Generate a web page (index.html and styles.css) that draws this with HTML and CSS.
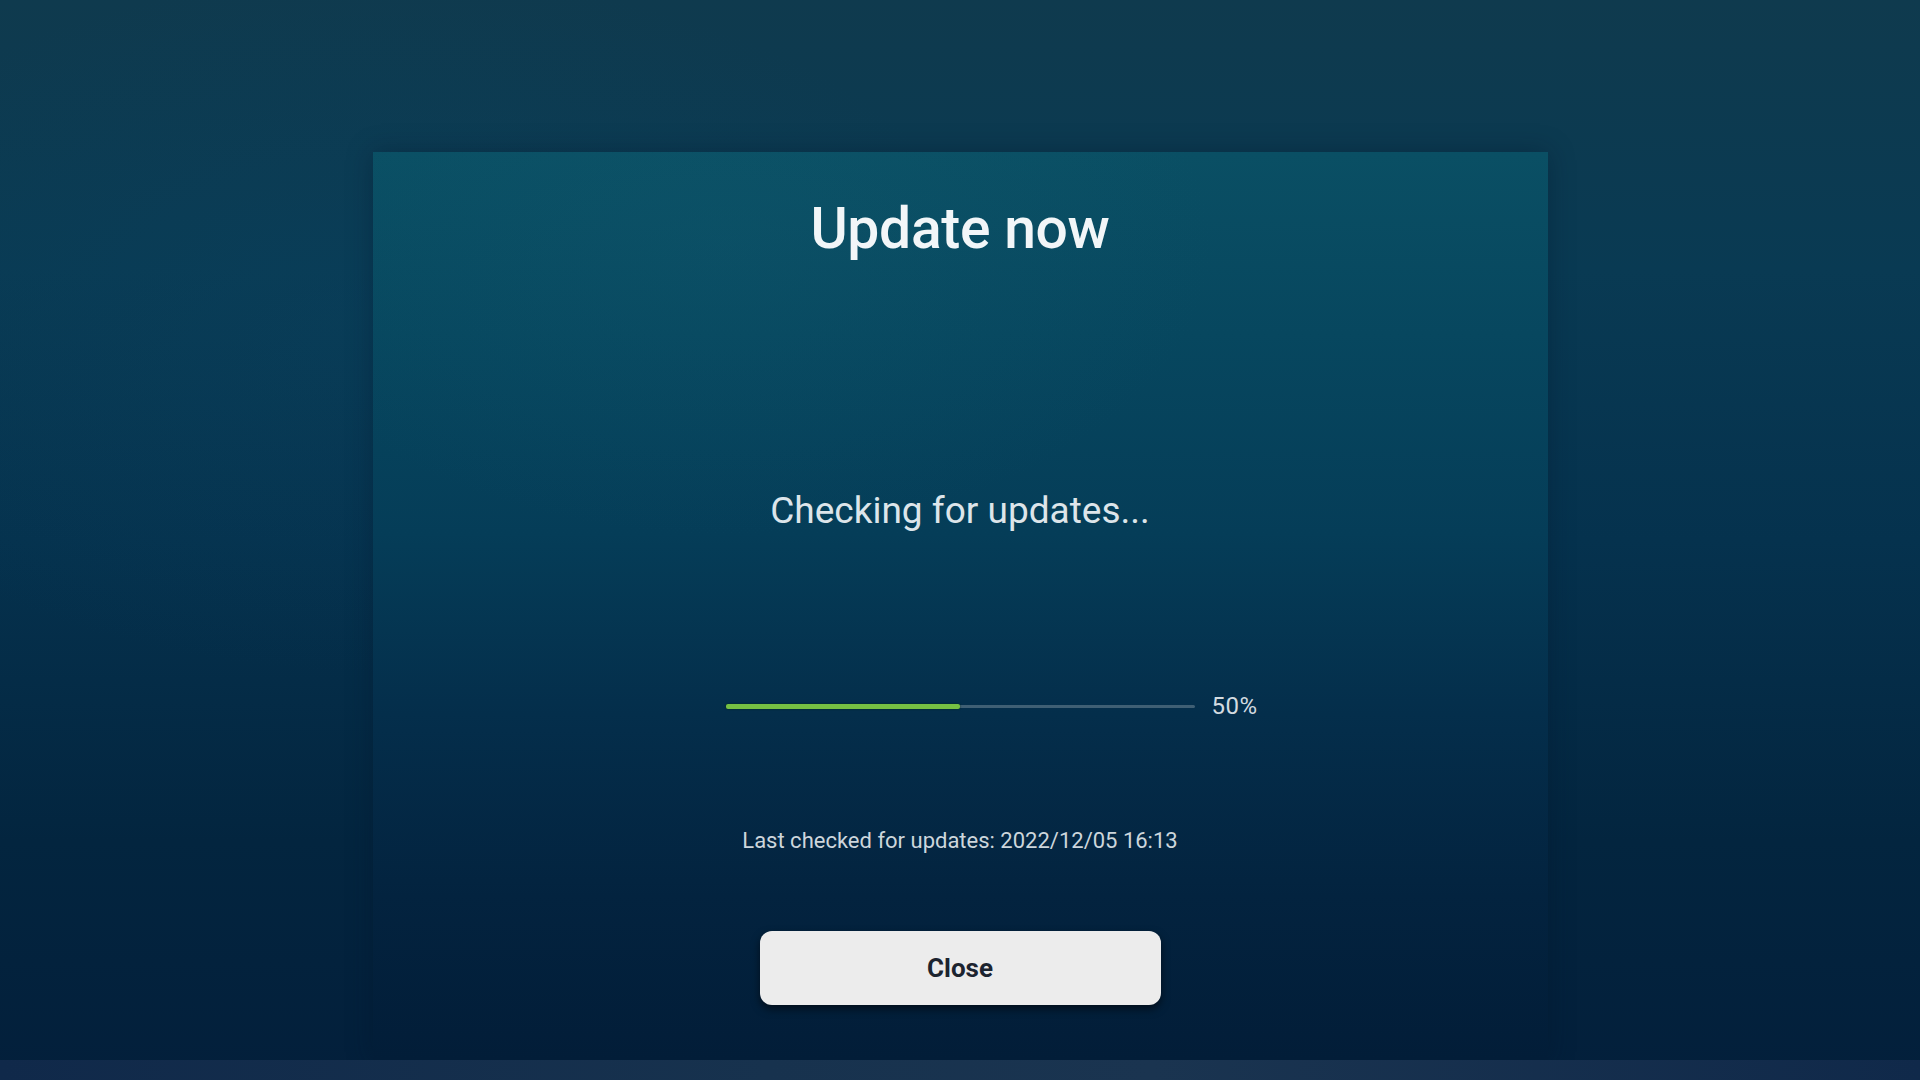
FILE: index.html
```html
<!DOCTYPE html>
<html lang="en">
<head>
<meta charset="utf-8">
<title>Update now</title>
<link rel="stylesheet" href="styles.css">
</head>
<body>
<div class="screen">
  <div class="panel">
    <h1 class="title">Update now</h1>
    <p class="status">Checking for updates...</p>
    <div class="progress">
      <div class="track"><div class="fill" style="width:50%"></div></div>
      <span class="pct">50%</span>
    </div>
    <p class="last">Last checked for updates: 2022/12/05 16:13</p>
    <button class="btn" type="button">Close</button>
  </div>
  <div class="strip"></div>
</div>
</body>
</html>
```

FILE: styles.css
```css
html, body {
  margin: 0;
  padding: 0;
  width: 1920px;
  height: 1080px;
  overflow: hidden;
}

body {
  font-family: Roboto, "Open Sans", "Liberation Sans", sans-serif;
  background: #062a45;
}

.screen {
  width: 1920px;
  height: 1080px;
  box-sizing: border-box;
  padding-top: 152px;
  display: flex;
  flex-direction: column;
  align-items: center;
  background:
    radial-gradient(ellipse 900px 500px at 20% 30%, rgba(10, 70, 100, 0.3), rgba(10, 70, 100, 0) 70%),
    linear-gradient(180deg, #0f3a4e 0%, #093a53 25%, #05324e 50%, #03253f 78%, #031f3b 100%);
}

.panel {
  width: 1175px;
  height: 908px;
  box-sizing: border-box;
  padding-top: 48px;
  display: flex;
  flex-direction: column;
  align-items: center;
  box-shadow: 0 0 24px rgba(0, 20, 40, 0.35);
  background:
    radial-gradient(ellipse 700px 420px at 30% 10%, rgba(20, 95, 115, 0.22), rgba(20, 95, 115, 0) 70%),
    linear-gradient(180deg, #0a4f64 0%, #07475f 20%, #053d58 42%, #042e4b 62%, #03233f 82%, #021d38 100%);
}

.title {
  margin: 0;
  font-size: 57px;
  line-height: 57px;
  font-weight: 500;
  color: #f2f6f8;
  letter-spacing: -0.3px;
}

.status {
  margin: 235px 0 0;
  font-size: 37px;
  line-height: 37px;
  font-weight: 400;
  color: #dde5ea;
}

.progress {
  margin-top: 165px;
  width: 100%;
  height: 24px;
  display: grid;
  grid-template-columns: 1fr 469px 1fr;
  align-items: center;
}

.track {
  grid-column: 2;
  height: 3px;
  background: #3f5f74;
  border-radius: 2px;
  display: flex;
  align-items: center;
}

.fill {
  height: 5px;
  background: #76c043;
  border-radius: 2px;
  box-shadow: 0 0 2px rgba(0, 40, 0, 0.8);
}

.pct {
  grid-column: 3;
  padding-left: 17px;
  font-size: 24px;
  line-height: 24px;
  color: #d3dbe0;
  letter-spacing: 0.5px;
}

.last {
  margin: 112px 0 0;
  font-size: 22px;
  line-height: 21px;
  color: #cdd6dc;
  letter-spacing: 0;
}

.btn {
  margin-top: 80px;
  width: 401px;
  height: 74px;
  border: none;
  border-radius: 12px;
  background: #ececec;
  color: #1c2430;
  font-family: Roboto, "Open Sans", "Liberation Sans", sans-serif;
  font-size: 26px;
  font-weight: 700;
  box-shadow: 0 4px 8px rgba(0, 0, 0, 0.55);
  padding: 0;
}

.strip {
  margin-top: auto;
  width: 100%;
  height: 20px;
  background: linear-gradient(90deg, #10294a 0%, #17324e 40%, #1a3450 60%, #10294a 100%);
}
```
